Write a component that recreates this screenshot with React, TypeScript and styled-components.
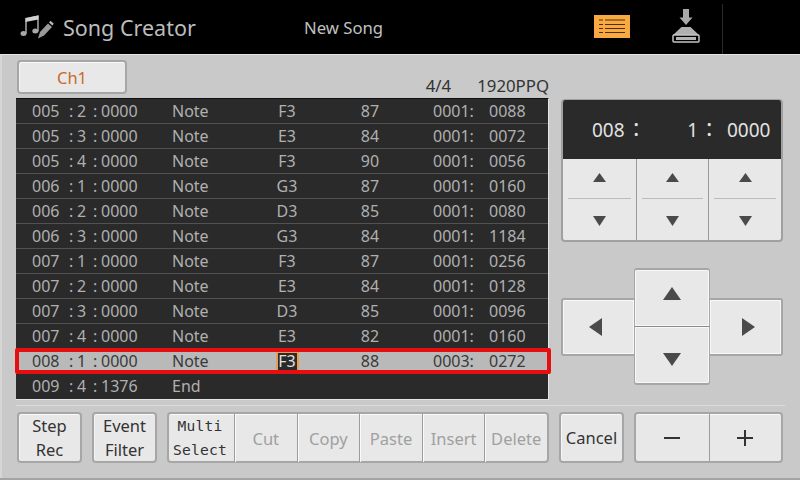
import React from 'react';
import styled, { createGlobalStyle } from 'styled-components';

const Global = createGlobalStyle`
  html, body { margin: 0; padding: 0; width: 800px; height: 480px; overflow: hidden; background: #c8c8c8; }
  * { box-sizing: border-box; }
  body { font-family: "Noto Sans", "Open Sans", sans-serif; }
`;

const Screen = styled.div`
  width: 800px; height: 480px; display: flex; flex-direction: column; background: #c9c9c9;
  border-bottom: 2px solid #a4a4a4;
`;
const Header = styled.header`
  height: 54px; flex: none; background: #000; display: flex; align-items: center;
`;
const TitleIcon = styled.svg`
  width: 34px; height: 26px; margin-left: 20px; flex: none;
`;
const Title = styled.div`
  margin-left: 9px; width: 241px; font-size: 21.5px; color: #bcbcbc;
`;
const SongName = styled.div`
  font-size: 16.7px; color: #c0c0c0; width: 290px;
`;
const ListIcon = styled.svg`
  width: 36px; height: 23px; flex: none; margin-top: -1px;
`;
const SaveIcon = styled.svg`
  width: 28px; height: 34px; flex: none; margin-left: 42px; margin-top: -2px;
`;
const Divider = styled.div`
  width: 1px; height: 50px; margin-left: 22px; margin-top: 4px; background: #2b2b2b;
`;
const Body = styled.div`
  flex: 1; display: flex; flex-direction: column; padding: 0 17px 0 14px;
  border-left: 2px solid #d6d6d6; border-top: 1px solid #e4e4e4;
`;
const Main = styled.div`
  display: grid; grid-template-columns: 533px 222px; column-gap: 12px; height: 351px;
  border-bottom: 1px solid #dcdcdc; width: 769px;
`;
const LeftCol = styled.div`
  display: flex; flex-direction: column;
`;
const TopRow = styled.div`
  height: 43px; display: flex; justify-content: space-between; padding-top: 5px;
`;
const Bevel = styled.button`
  font-family: "Noto Sans", sans-serif; background: #e8e8e8; border: 2px solid #a6a6a6; border-radius: 4px;
  box-shadow: inset 0 1px 0 #fafafa, inset 1px 0 0 #f4f4f4; padding: 0; margin: 0; color: #333;
`;
const ChannelButton = styled(Bevel)`
  width: 110px; height: 34px; margin-left: 1px; font-size: 16.5px; color: #c96a28;
`;
const Info = styled.div`
  display: flex; align-items: flex-end; font-size: 16.8px; color: #333; line-height: 22px; height: 37px;
`;
const Meter = styled.span`
  margin-right: 26px;
`;
const EventList = styled.div`
  height: 302px; background: #2a2a2a; position: relative; border-top: 1px solid #111;
  border-bottom: 1px solid #e4e4e4; border-right: 1px solid #e8e8e8;
`;
const Row = styled.div<{ $selected?: boolean; $last?: boolean }>`
  height: 25px; display: grid; grid-template-columns: 156px 90px 50px 121px 56px 56px; align-items: center;
  font-size: 16px; line-height: 24px; position: relative;
  color: ${p => (p.$selected ? '#3a3a3a' : '#b0b0b0')};
  background: ${p => (p.$selected ? '#b9b9b9' : '#2a2a2a')};
  border-bottom: 1px solid ${p => (p.$last ? 'transparent' : '#525252')};
`;
const SelectFrame = styled.div`
  position: absolute; left: -1px; right: -3px; top: -1px; bottom: -1px; border: 4px solid #e60f0f; border-radius: 2px;
  pointer-events: none;
`;
const TimeCell = styled.div`
  display: grid; grid-template-columns: 37px 8px 16px 8px 1fr; padding-left: 16px; white-space: pre;
`;
const Centered = styled.div`
  text-align: center;
`;
const VelCell = styled(Centered)`
  padding-right: 5px;
`;
const KeyValue = styled.span<{ $active?: boolean }>`
  display: inline-block; line-height: 20px; padding: 0 2px;
  ${p => p.$active ? 'background:#2a2a2a;color:#e0e0e0;border:2px solid #e8a050;width:23px;height:21px;line-height:17px;padding:0;' : ''}
`;
const RightCol = styled.div`
  padding-top: 44px; display: flex; flex-direction: column;
`;
const ReadoutPanel = styled.div`
  width: 222px; height: 143px; border: 2px solid #a0a0a0; border-top-width: 1px; border-radius: 4px; display: flex; flex-direction: column; overflow: hidden;
  background: #e8e8e8;
`;
const Readout = styled.div`
  height: 59px; flex: none; background: #2a2a2a; color: #e2e2e2; font-size: 19px; display: grid;
  grid-template-columns: 41px 10px 55px 29px 1fr; align-items: center; padding-left: 29px; line-height: 24px;
`;
const ReadoutSep = styled.span<{ $wide?: boolean }>`
  font-size: 24px; font-weight: 400; margin-top: -5px; padding-left: ${p => (p.$wide ? '8px' : '0')};
`;
const ReadoutNum = styled.span<{ $right?: boolean }>`
  text-align: ${p => (p.$right ? 'right' : 'left')};
`;
const Spinners = styled.div`
  flex: 1; display: grid; grid-template-columns: repeat(3, 1fr);
`;
const Spinner = styled.div`
  display: flex; flex-direction: column; border-left: 1px solid #9a9a9a;
  &:first-child { border-left: 0; }
`;
const SpinBtn = styled.div<{ $lower?: boolean }>`
  flex: 1; display: flex; align-items: center; justify-content: center;
  padding-top: ${p => (p.$lower ? '4px' : '0')};
`;
const SpinRule = styled.div`
  height: 1px; margin: 1px 5px 0; background: #bcbcbc;
`;
const Tri = styled.svg<{ $w: number; $h: number }>`
  width: ${p => p.$w}px; height: ${p => p.$h}px; display: block;
`;
const Pad = styled.div`
  margin-top: 26px; display: grid; grid-template-columns: 73px 76px 73px; grid-template-rows: 30px 29px 29px 29px; width: 222px;
`;
const PadButton = styled(Bevel)<{ $area: string; $side: 'left' | 'right' | 'up' | 'down' }>`
  grid-area: ${p => p.$area}; display: flex; align-items: center; justify-content: center; border-radius: 3px;
  box-shadow: inset 0 0 0 1px #f8f8f8;
  ${p => p.$side === 'left' && 'border-right: 0; border-radius: 3px 0 0 3px; padding-right: 7px;'}
  ${p => p.$side === 'right' && 'border-left: 0; border-radius: 0 3px 3px 0; padding-left: 6px;'}
  ${p => p.$side === 'up' && 'border-bottom: 1px solid #8a8a8a; border-radius: 3px 3px 0 0; border-left-width: 1px; border-right-width: 1px; padding-bottom: 9px;'}
  ${p => p.$side === 'down' && 'border-top: 0; border-radius: 0 0 3px 3px; border-left-width: 1px; border-right-width: 1px; padding-top: 9px;'}
`;
const Footer = styled.footer`
  display: flex; margin-top: 6px; height: 51px; margin-left: 1px;
`;
const ActionBtn = styled(Bevel)`
  width: 65px; height: 51px; font-size: 16.5px; line-height: 24px; margin-right: 10px; color: #333;
`;
const MonoLabel = styled.span`
  font-family: "DejaVu Sans Mono", monospace; font-size: 14.6px; line-height: 24px; display: block; letter-spacing: 0.2px;
`;
const EditGroup = styled.div`
  width: 382px; height: 51px; display: grid; grid-template-columns: 65px repeat(5, 1fr); border: 2px solid #a6a6a6; border-radius: 4px;
  background: #e8e8e8; margin-right: 10px; box-shadow: inset 0 1px 0 #fafafa;
`;
const EditBtn = styled.div<{ $off?: boolean }>`
  display: flex; align-items: center; justify-content: center; text-align: center; font-size: 16.5px;
  color: ${p => (p.$off ? '#a0a0a0' : '#333')}; border-left: 1px solid #9c9c9c;
  box-shadow: inset 1px 0 0 #fafafa;
  &:first-child { border-left: 0; box-shadow: none; padding-right: 3px; }
`;
const PlusMinus = styled.div`
  width: 149px; height: 51px; display: grid; grid-template-columns: 1fr 1fr; border: 2px solid #a6a6a6; border-radius: 4px; background: #e8e8e8;
  box-shadow: inset 0 1px 0 #fafafa;
`;
const PmBtn = styled.div`
  display: flex; align-items: center; justify-content: center; border-left: 1px solid #9c9c9c;
  &:first-child { border-left: 0; }
`;

type Ev = [string, string, string, string, string, string, string, string];
const rows: Ev[] = [
  ['005','2','0000','Note','F3','87','0001:','0088'],
  ['005','3','0000','Note','E3','84','0001:','0072'],
  ['005','4','0000','Note','F3','90','0001:','0056'],
  ['006','1','0000','Note','G3','87','0001:','0160'],
  ['006','2','0000','Note','D3','85','0001:','0080'],
  ['006','3','0000','Note','G3','84','0001:','1184'],
  ['007','1','0000','Note','F3','87','0001:','0256'],
  ['007','2','0000','Note','E3','84','0001:','0128'],
  ['007','3','0000','Note','D3','85','0001:','0096'],
  ['007','4','0000','Note','E3','82','0001:','0160'],
  ['008','1','0000','Note','F3','88','0003:','0272'],
  ['009','4','1376','End','','','',''],
];

const Up = ({ w, h }: { w: number; h: number }) => (
  <Tri $w={w} $h={h} viewBox="0 0 10 10" preserveAspectRatio="none"><polygon points="5,0 10,10 0,10" fill="#4a4a4a" /></Tri>
);
const Down = ({ w, h }: { w: number; h: number }) => (
  <Tri $w={w} $h={h} viewBox="0 0 10 10" preserveAspectRatio="none"><polygon points="0,0 10,0 5,10" fill="#4a4a4a" /></Tri>
);
const Left = ({ w, h }: { w: number; h: number }) => (
  <Tri $w={w} $h={h} viewBox="0 0 10 10" preserveAspectRatio="none"><polygon points="10,0 10,10 0,5" fill="#4a4a4a" /></Tri>
);
const Right = ({ w, h }: { w: number; h: number }) => (
  <Tri $w={w} $h={h} viewBox="0 0 10 10" preserveAspectRatio="none"><polygon points="0,0 10,5 0,10" fill="#4a4a4a" /></Tri>
);

export default function App() {
  return (
    <Screen>
      <Global />
      <Header>
        <TitleIcon viewBox="0 0 34 26" fill="none">
          <path d="M6 19.500V4.500L18 2v15.500" stroke="#c4c4c4" strokeWidth="1.300" />
          <path d="M5.500 4.300L18.500 1.500v4L5.500 8z" fill="#d0d0d0" />
          <ellipse cx="3.500" cy="19.500" rx="3" ry="2.500" fill="#a8a8a8" />
          <ellipse cx="15.300" cy="17" rx="3" ry="2.500" fill="#a8a8a8" />
          <path d="M18 24.500l2-6.500 8-8.500 4 3.500-8 8.500z" fill="#9a9a9a" />
          <path d="M29 8.500l1.500-1.800 3.300 3-1.500 1.900z" fill="#b8b8b8" />
        </TitleIcon>
        <Title>Song Creator</Title>
        <SongName>New Song</SongName>
        <ListIcon viewBox="0 0 36 23">
          <rect width="36" height="23" fill="#f9a941" />
          <path d="M5 5h4M11 5h20M5 9.500h4M11 9.500h20M5 13.500h4M11 13.500h20M5 17.500h4M11 17.500h20" stroke="#4a3010" strokeWidth="1" />
        </ListIcon>
        <SaveIcon viewBox="0 0 28 34">
          <path d="M11 0h6v8.500h3.500L14 16 7.500 8.500H11z" fill="#a8a8a8" />
          <path d="M9.500 18h9L27 26H1z" fill="#b0b0b0" />
          <rect x="1" y="26" width="26" height="7" rx="1" fill="#000" stroke="#c4c4c4" strokeWidth="1.500" />
          <rect x="4" y="28" width="20" height="3" fill="#b4b4b4" />
        </SaveIcon>
        <Divider />
      </Header>
      <Body>
        <Main>
          <LeftCol>
            <TopRow>
              <ChannelButton>Ch1</ChannelButton>
              <Info>
                <Meter>4/4</Meter>
                <span>1920PPQ</span>
              </Info>
            </TopRow>
            <EventList>
              {rows.map((r, i) => {
                const selected = i === 10;
                return (
                  <Row key={i} $selected={selected} $last={i >= 10}>
                    <TimeCell>
                      <span>{r[0]}</span><span>:</span><span>{r[1]}</span><span>:</span><span>{r[2]}</span>
                    </TimeCell>
                    <div>{r[3]}</div>
                    <Centered><KeyValue $active={selected}>{r[4]}</KeyValue></Centered>
                    <VelCell>{r[5]}</VelCell>
                    <div>{r[6]}</div>
                    <div>{r[7]}</div>
                    {selected && <SelectFrame />}
                  </Row>
                );
              })}
            </EventList>
          </LeftCol>
          <RightCol>
            <ReadoutPanel>
              <Readout>
                <ReadoutNum>008</ReadoutNum>
                <ReadoutSep>:</ReadoutSep>
                <ReadoutNum $right>1</ReadoutNum>
                <ReadoutSep $wide>:</ReadoutSep>
                <ReadoutNum>0000</ReadoutNum>
              </Readout>
              <Spinners>
                {[0, 1, 2].map(n => (
                  <Spinner key={n}>
                    <SpinBtn><Up w={13} h={9} /></SpinBtn>
                    <SpinRule />
                    <SpinBtn $lower><Down w={13} h={10} /></SpinBtn>
                  </Spinner>
                ))}
              </Spinners>
            </ReadoutPanel>
            <Pad>
              <PadButton $side="left" $area="2 / 1 / 4 / 2"><Left w={13} h={18} /></PadButton>
              <PadButton $side="up" $area="1 / 2 / 3 / 3"><Up w={18} h={13} /></PadButton>
              <PadButton $side="down" $area="3 / 2 / 5 / 3"><Down w={18} h={13} /></PadButton>
              <PadButton $side="right" $area="2 / 3 / 4 / 4"><Right w={13} h={18} /></PadButton>
            </Pad>
          </RightCol>
        </Main>
        <Footer>
          <ActionBtn>Step<br />Rec</ActionBtn>
          <ActionBtn>Event<br />Filter</ActionBtn>
          <EditGroup>
            <EditBtn><div><MonoLabel>Multi</MonoLabel><MonoLabel>Select</MonoLabel></div></EditBtn>
            <EditBtn $off>Cut</EditBtn>
            <EditBtn $off>Copy</EditBtn>
            <EditBtn $off>Paste</EditBtn>
            <EditBtn $off>Insert</EditBtn>
            <EditBtn $off>Delete</EditBtn>
          </EditGroup>
          <ActionBtn>Cancel</ActionBtn>
          <PlusMinus>
            <PmBtn><svg width="16" height="2"><rect width="16" height="2" fill="#333" /></svg></PmBtn>
            <PmBtn><svg width="16" height="16"><path d="M7 0h2v7h7v2H9v7H7V9H0V7h7z" fill="#333" /></svg></PmBtn>
          </PlusMinus>
        </Footer>
      </Body>
    </Screen>
  );
}
